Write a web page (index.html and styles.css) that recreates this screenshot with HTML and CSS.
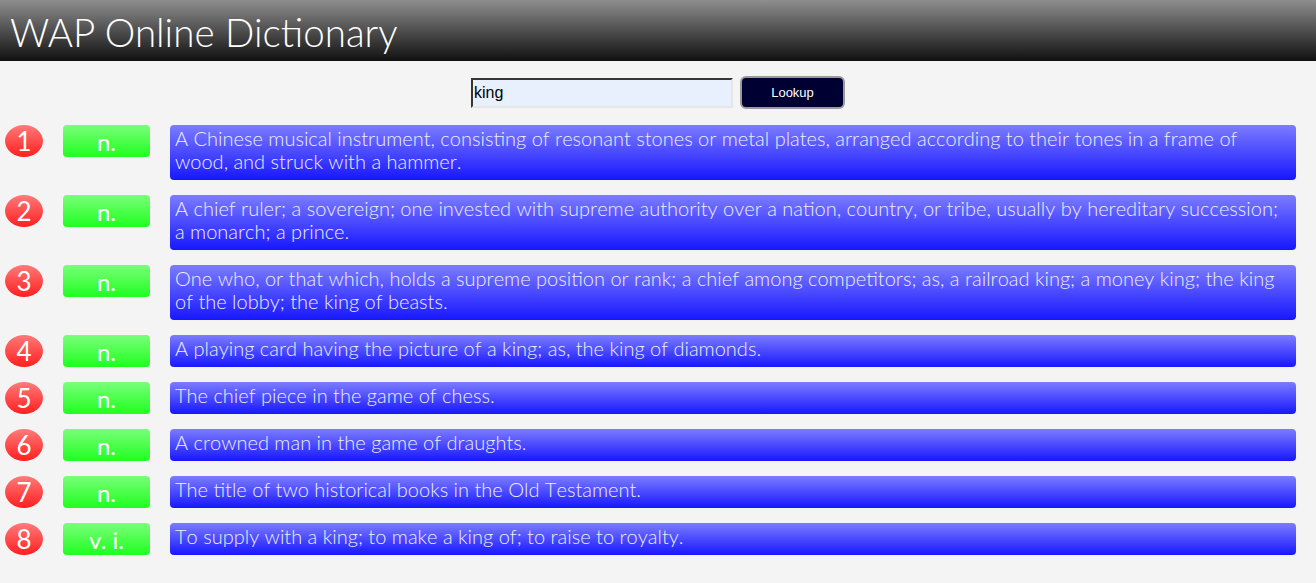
FILE: index.html
```html
<!DOCTYPE html>
<html>
<head>
<meta charset="utf-8">
<title>WAP Online Dictionary</title>
<link rel="stylesheet" href="styles.css">
</head>
<body>
<header class="top">
  <h1 class="title">WAP Online Dictionary</h1>
</header>
<form class="search">
  <input class="query" type="text" value="king">
  <button class="lookup" type="button">Lookup</button>
</form>
<div class="list">
  <div class="row"><span class="num">1</span><span class="pos">n.</span><div class="def">A Chinese musical instrument, consisting of resonant stones or metal plates, arranged according to their tones in a frame of wood, and struck with a hammer.</div></div>
  <div class="row"><span class="num">2</span><span class="pos">n.</span><div class="def">A chief ruler; a sovereign; one invested with supreme authority over a nation, country, or tribe, usually by hereditary succession; a monarch; a prince.</div></div>
  <div class="row"><span class="num">3</span><span class="pos">n.</span><div class="def">One who, or that which, holds a supreme position or rank; a chief among competitors; as, a railroad king; a money king; the king of the lobby; the king of beasts.</div></div>
  <div class="row"><span class="num">4</span><span class="pos">n.</span><div class="def">A playing card having the picture of a king; as, the king of diamonds.</div></div>
  <div class="row"><span class="num">5</span><span class="pos">n.</span><div class="def">The chief piece in the game of chess.</div></div>
  <div class="row"><span class="num">6</span><span class="pos">n.</span><div class="def">A crowned man in the game of draughts.</div></div>
  <div class="row"><span class="num">7</span><span class="pos">n.</span><div class="def">The title of two historical books in the Old Testament.</div></div>
  <div class="row"><span class="num">8</span><span class="pos">v. i.</span><div class="def">To supply with a king; to make a king of; to raise to royalty.</div></div>
</div>
</body>
</html>
```
FILE: styles.css
```css
html, body {
  margin: 0;
  padding: 0;
}
body {
  background: #f4f4f4;
  font-family: Lato, "Open Sans", sans-serif;
  font-weight: 300;
}
.top {
  height: 61px;
  background: linear-gradient(#8e8e8e, #101010);
  display: flex;
  align-items: center;
}
.title {
  margin: 0 0 0 10px;
  font-size: 38.6px;
  font-weight: 300;
  color: #fff;
  line-height: 1;
  position: relative;
  top: 2px;
}
.search {
  display: flex;
  justify-content: center;
  align-items: center;
  gap: 7px;
  margin: 15px 0 16px;
}
.query {
  box-sizing: border-box;
  width: 262px;
  height: 30px;
  margin: 0;
  padding: 0 1px;
  border: 2px inset #8a8a8a;
  border-right-color: #e6e6e6;
  border-bottom-color: #e6e6e6;
  background: #e8f0fe;
  font-family: "Liberation Sans", Arial, sans-serif;
  font-size: 16px;
  color: #000;
}
.lookup {
  box-sizing: border-box;
  width: 105px;
  height: 33px;
  margin: 0;
  border: 2px solid #9a9a9a;
  border-radius: 6px;
  background: #000033;
  color: #fff;
  font-family: "Liberation Sans", Arial, sans-serif;
  font-size: 13px;
}
.list {
  display: flex;
  flex-direction: column;
  gap: 15px;
  padding: 0 20px 0 5px;
}
.row {
  display: flex;
  align-items: flex-start;
  gap: 20px;
}
.num {
  flex: none;
  width: 38px;
  height: 32px;
  border-radius: 50%;
  background: linear-gradient(#ff7a7a, #ff1f1f);
  color: #fff;
  font-size: 26px;
  font-weight: 400;
  line-height: 32px;
  text-align: center;
}
.pos {
  flex: none;
  width: 87px;
  height: 32px;
  border-radius: 4px;
  background: linear-gradient(#7aff7a, #1fff1f);
  color: #fff;
  font-size: 24px;
  font-weight: 400;
  line-height: 33px;
  text-align: center;
}
.def {
  flex: 1;
  min-height: 32px;
  box-sizing: border-box;
  padding: 2px 6px 7px 5px;
  border-radius: 4px;
  background: linear-gradient(#7c7cff, #1717ff);
  color: #eeeeff;
  font-size: 20px;
  line-height: 23px;
  font-kerning: none;
}
```
